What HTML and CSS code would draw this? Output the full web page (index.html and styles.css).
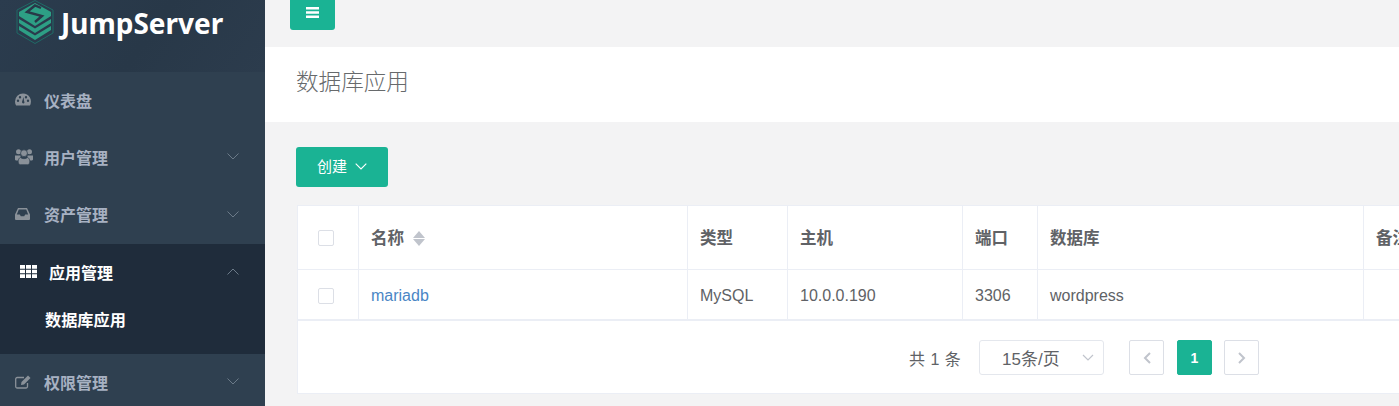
FILE: index.html
```html
<!DOCTYPE html>
<html lang="en">
<head>
    <meta charset="UTF-8">
    <title>数据库应用</title>
    <link rel="stylesheet" href="styles.css">
</head>
<body>
    <div class="sidebar">
        <div class="logo">
            <svg class="logo-mark" width="38" height="44" viewBox="0 0 38 44">
                <path d="M19 0.500 L37 10 V33 L19 43.500 L1 33 V10 Z" fill="none" stroke="#1f6b66" stroke-width="1"/>
                <path d="M3 26 L19 35.500 L35 26 V30 L19 40 L3 30 Z" fill="#2d9f85"/>
                <path d="M3 19 L19 28.500 L35 19 V23 L19 33 L3 23 Z" fill="#2d9f85"/>
                <path d="M19 3 L35 12 V16 L19 26 L3 16 V12 Z" fill="#2d9f85"/>
                <path d="M25 8 L19 5.500 L11 12 L26 16 L19 22" fill="none" stroke="#283848" stroke-width="2.400"/>
            </svg>
            <span class="logo-text">JumpServer</span>
        </div>
        <a class="nav-item" href="#">
            <span class="icon-box"><svg width="16" height="13" viewBox="0 1 16 12"><path d="M8 1a8 8 0 0 0-8 8c0 1.500.4 2.900 1.100 4h13.800A8 8 0 0 0 8 1zM3 9.500a1.200 1.200 0 1 1 0-2.400 1.200 1.200 0 0 1 0 2.400zm2-3.600a1.200 1.200 0 1 1 0-2.400 1.200 1.200 0 0 1 0 2.400zm3.500 5.100a1.500 1.500 0 0 1-1.300-2.200L8.500 4.500l.6 4.300A1.500 1.500 0 0 1 8.500 11zM11 5.900a1.200 1.200 0 1 1 0-2.400 1.200 1.200 0 0 1 0 2.400zm2 3.600a1.200 1.200 0 1 1 0-2.400 1.200 1.200 0 0 1 0 2.400z" fill="#8a9199" fill-rule="evenodd"/></svg></span>
            <span>仪表盘</span>
        </a>
        <a class="nav-item" href="#">
            <span class="icon-box"><svg width="18" height="16" viewBox="0 0 18 16"><g fill="#8a9199"><circle cx="3.500" cy="2.700" r="2.500"/><circle cx="14.500" cy="2.700" r="2.500"/><path d="M0 6.500h5.500v5H1c-.6 0-1-.5-1-1.200zM18 6.500h-5.500v5H17c.6 0 1-.5 1-1.200z"/></g><g fill="#8a9199" stroke="#2f4050" stroke-width=".7"><circle cx="9" cy="4.200" r="3.400"/><path d="M5.500 8.500c1 .8 2.200 1.200 3.500 1.200s2.500-.4 3.500-1.200c1.400.3 2.300 2 2.300 4.200 0 1.900-1 3-2.300 3H5.500c-1.300 0-2.300-1.100-2.300-3 0-2.200.9-3.900 2.300-4.200z"/></g></svg></span>
            <span>用户管理</span>
            <svg class="chevron" width="12" height="7" viewBox="0 0 12 7"><path d="M.5.500 6 6 11.500.500" fill="none" stroke="#6b7a88"/></svg>
        </a>
        <a class="nav-item" href="#">
            <span class="icon-box"><svg width="15" height="12" viewBox="0 0 15 12"><path d="M3 0h9l3 6.500V11a1 1 0 0 1-1 1H1a1 1 0 0 1-1-1V6.500zM3.800 1.600 1.800 6.500h3l1 1.800h3.400l1-1.800h3l-2-4.900z" fill="#8a9199" fill-rule="evenodd"/></svg></span>
            <span>资产管理</span>
            <svg class="chevron" width="12" height="7" viewBox="0 0 12 7"><path d="M.5.500 6 6 11.500.500" fill="none" stroke="#6b7a88"/></svg>
        </a>
        <div class="nav-group">
            <a class="nav-item nav-active" href="#">
                <span class="icon-box"><svg width="17" height="13" viewBox="0 0 17 13"><path d="M0 0h5v3.700H0zM6 0h5v3.700H6zM12 0h5v3.700h-5zM0 4.700h5v3.600H0zM6 4.700h5v3.600H6zM12 4.700h5v3.600h-5zM0 9.300h5V13H0zM6 9.300h5V13H6zM12 9.300h5V13h-5z" fill="#fff"/></svg></span>
                <span>应用管理</span>
                <svg class="chevron" width="12" height="7" viewBox="0 0 12 7"><path d="M.5 6.500 6 1l5.500 5.500" fill="none" stroke="#6b7a88"/></svg>
            </a>
            <a class="nav-sub" href="#">数据库应用</a>
        </div>
        <a class="nav-item" href="#">
            <span class="icon-box"><svg width="16" height="14" viewBox="0 0 16 14"><g fill="none" stroke="#8a9199" stroke-width="1.300"><path d="M12.500 8v3.500a1.500 1.500 0 0 1-1.500 1.500H2.200A1.500 1.500 0 0 1 .7 11.500V4A1.500 1.500 0 0 1 2.200 2.500H9"/></g><path d="M13 .5 15.500 3 9 9.500l-3 .5.500-3z" fill="#8a9199"/></svg></span>
            <span>权限管理</span>
            <svg class="chevron" width="12" height="7" viewBox="0 0 12 7"><path d="M.5.500 6 6 11.500.500" fill="none" stroke="#6b7a88"/></svg>
        </a>
    </div>

    <div class="main">
        <div class="topbar">
            <button class="toggle-btn">
                <svg width="13" height="11" viewBox="0 0 13 11"><path d="M0 0h13v2.400H0zM0 4.300h13v2.400H0zM0 8.600h13V11H0z" fill="#fff"/></svg>
            </button>
        </div>
        <div class="page-title">
            <h2>数据库应用</h2>
        </div>
        <div class="content">
            <button class="create-btn">创建
                <svg width="12" height="7" viewBox="0 0 12 7"><path d="M.7.700 6 6l5.300-5.300" fill="none" stroke="#fff" stroke-width="1.100"/></svg>
            </button>
            <div class="card">
                <table class="data-table">
                    <colgroup>
                        <col class="col-check"><col class="col-name"><col class="col-type"><col class="col-host"><col class="col-port"><col class="col-db"><col class="col-note">
                    </colgroup>
                    <thead>
                        <tr>
                            <th class="center"><span class="checkbox"></span></th>
                            <th>名称 <span class="sort"><i class="sort-up"></i><i class="sort-down"></i></span></th>
                            <th>类型</th>
                            <th>主机</th>
                            <th>端口</th>
                            <th>数据库</th>
                            <th>备注</th>
                        </tr>
                    </thead>
                    <tbody>
                        <tr>
                            <td class="center"><span class="checkbox"></span></td>
                            <td><a href="#">mariadb</a></td>
                            <td>MySQL</td>
                            <td>10.0.0.190</td>
                            <td>3306</td>
                            <td>wordpress</td>
                            <td></td>
                        </tr>
                    </tbody>
                </table>
                <div class="pager">
                    <span class="total">共 1 条</span>
                    <div class="page-size">
                        <span>15条/页</span>
                        <svg width="12" height="7" viewBox="0 0 12 7"><path d="M1 1l5 5 5-5" fill="none" stroke="#c0c4cc" stroke-width="1.200"/></svg>
                    </div>
                    <button class="page-btn prev"><svg width="8" height="12" viewBox="0 0 8 12"><path d="M7 1 2 6l5 5" fill="none" stroke="#c0c4cc" stroke-width="2"/></svg></button>
                    <button class="page-btn current">1</button>
                    <button class="page-btn"><svg width="8" height="12" viewBox="0 0 8 12"><path d="m1 1 5 5-5 5" fill="none" stroke="#c0c4cc" stroke-width="2"/></svg></button>
                </div>
            </div>
        </div>
    </div>
</body>
</html>
```

FILE: styles.css
```css
* {
    box-sizing: border-box;
}
html, body {
    margin: 0;
    padding: 0;
    height: 100%;
    overflow: hidden;
}
body {
    display: flex;
    font-family: "Liberation Sans", "Noto Sans CJK SC", sans-serif;
    font-size: 16px;
    color: #676a6c;
    background-color: #f3f3f4;
}
a {
    text-decoration: none;
}
.sidebar {
    width: 265px;
    flex-shrink: 0;
    background-color: #2f4050;
    overflow: hidden;
}
.logo {
    height: 72px;
    display: flex;
    align-items: flex-start;
    gap: 7px;
    padding-left: 16px;
    background: linear-gradient(125deg, #2b3c4e 0%, #283848 55%, #2c3c4d 100%);
}
.logo-text {
    font-family: "Noto Sans", "Liberation Sans", sans-serif;
    font-size: 29px;
    font-weight: 700;
    line-height: 45px;
    color: #fff;
    transform: scaleX(0.965);
    transform-origin: left;
}
.nav-item {
    height: 57.3px;
    display: flex;
    align-items: center;
    padding: 0 26px 2px 15px;
    color: #a7b1c2;
    font-size: 16px;
    font-weight: 700;
    font-family: "Noto Sans CJK SC", sans-serif;
}
.icon-box {
    width: 29px;
    flex-shrink: 0;
    display: flex;
    align-items: center;
}
.chevron {
    margin-left: auto;
}
.nav-group {
    height: 110px;
    background-color: #1f2c3b;
}
.nav-active {
    color: #fff;
    padding-left: 20px;
}
.nav-sub {
    display: block;
    padding: 8px 0 0 45px;
    color: #fff;
    font-size: 16.2px;
    font-weight: 700;
    line-height: 20px;
    font-family: "Noto Sans CJK SC", sans-serif;
}
.main {
    flex: 1;
    min-width: 0;
    overflow: hidden;
}
.topbar {
    height: 47px;
    padding-left: 25px;
}
.toggle-btn {
    width: 45px;
    height: 30px;
    display: flex;
    align-items: center;
    justify-content: center;
    border: 0;
    padding: 0 0 6px;
    border-radius: 0 0 3px 3px;
    background-color: #1ab394;
}
.page-title {
    height: 75px;
    background-color: #fff;
    padding-left: 31px;
}
.page-title h2 {
    margin: 0;
    font-size: 22.6px;
    font-weight: 300;
    line-height: 67px;
    color: #676a6c;
    font-family: "Noto Sans CJK SC", sans-serif;
}
.content {
    padding: 25px 0 0 31px;
}
.create-btn {
    width: 92px;
    height: 40px;
    display: flex;
    align-items: center;
    justify-content: center;
    gap: 8px;
    border: 0;
    padding: 0 0 4px;
    border-radius: 3px;
    background-color: #1ab394;
    color: #fff;
    font-size: 15px;
    font-family: "Noto Sans CJK SC", sans-serif;
}
.create-btn svg {
    margin-top: 2px;
}
.card {
    width: 1300px;
    height: 189px;
    margin: 18px 0 0 1px;
    background-color: #fff;
    border: 1px solid #ebeef5;
}
.data-table {
    width: 100%;
    table-layout: fixed;
    border-collapse: collapse;
    border-bottom: 2px solid #ebeef5;
}
.col-check { width: 60px; }
.col-name { width: 329px; }
.col-type { width: 100px; }
.col-host { width: 175px; }
.col-port { width: 75px; }
.col-db { width: 326px; }
.data-table th, .data-table td {
    padding-left: 12.5px;
    padding-right: 12px;
    text-align: left;
    border-right: 1px solid #ebeef5;
    color: #606266;
    overflow: hidden;
    white-space: nowrap;
}
.data-table th {
    height: 63px;
    padding-bottom: 2px;
    font-size: 16.5px;
    font-weight: 700;
    border-bottom: 1px solid #ebeef5;
    font-family: "Noto Sans CJK SC", sans-serif;
}
.data-table td {
    height: 51px;
    padding-top: 4px;
    font-size: 16px;
}
.data-table td a {
    color: #4a86c5;
}
.data-table .center {
    padding-left: 0;
    padding-right: 4px;
    text-align: center;
}
.data-table thead .center {
    padding-bottom: 4px;
}
.data-table tbody .center {
    padding-top: 2px;
}
.checkbox {
    display: inline-block;
    width: 16px;
    height: 16px;
    vertical-align: middle;
    border: 1px solid #dcdfe6;
    border-radius: 2px;
    background-color: #fff;
}
.sort {
    display: inline-block;
    margin-left: 5px;
    vertical-align: -2px;
}
.sort i {
    display: block;
    width: 0;
    height: 0;
    border-left: 6px solid transparent;
    border-right: 6px solid transparent;
}
.sort-up {
    border-bottom: 7px solid #c0c4cc;
    margin-bottom: 1px;
}
.sort-down {
    border-top: 7px solid #c0c4cc;
}
.pager {
    display: flex;
    align-items: center;
    height: 72px;
    padding: 1px 0 0 611px;
}
.total {
    width: 70px;
    font-size: 16px;
    word-spacing: 1px;
    color: #606266;
}
.page-size {
    width: 125px;
    height: 35px;
    margin-right: 25px;
    display: flex;
    align-items: center;
    justify-content: space-between;
    padding: 0 9px 0 22px;
    border: 1px solid #e4e7ed;
    border-radius: 3px;
    font-size: 17px;
    color: #606266;
}
.page-btn {
    width: 35px;
    height: 35px;
    padding: 0;
    display: flex;
    align-items: center;
    justify-content: center;
    background-color: #fff;
    border: 1px solid #dcdfe6;
    border-radius: 2px;
}
.prev {
    margin-right: 13px;
}
.current {
    margin-right: 12px;
    background-color: #1ab394;
    border-color: #1ab394;
    color: #fff;
    font-size: 14px;
    font-weight: 700;
    font-family: "Liberation Sans", sans-serif;
}
```
